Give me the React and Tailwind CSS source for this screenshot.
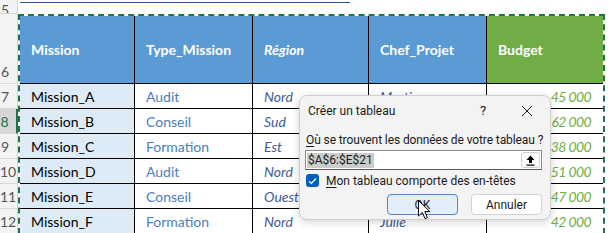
import React from "react";

const rows = [
  ["Mission_A", "Audit", "Nord", "Martin", "45 000"],
  ["Mission_B", "Conseil", "Sud", "Sophie", "62 000"],
  ["Mission_C", "Formation", "Est", "Paul", "38 000"],
  ["Mission_D", "Audit", "Nord", "Claire", "51 000"],
  ["Mission_E", "Conseil", "Ouest", "Marc", "47 000"],
  ["Mission_F", "Formation", "Nord", "Julie", "42 000"],
];

const headers = [
  { label: "Mission", cls: "bg-[#5b9bd5]" },
  { label: "Type_Mission", cls: "bg-[#5b9bd5]" },
  { label: "Région", cls: "bg-[#5b9bd5] italic" },
  { label: "Chef_Projet", cls: "bg-[#5b9bd5]" },
  { label: "Budget", cls: "bg-[#70ad47] border-r-0" },
];

const cellBase = "flex items-center border-b border-r border-black pl-[11px] whitespace-nowrap overflow-hidden";

function RowHead({ n, h, active }) {
  return (
    <div
      className={`flex items-end border-b border-[#d9d9d9] pb-[3px] pr-[7px] ${h} ${
        active ? "bg-[#d6d6d6] text-[#217346] border-r-2 border-r-[#217346]" : "bg-[#f3f3f3] text-[#555] border-r border-r-[#d4d4d4]"
      }`}
    >
      <span className="w-full text-center leading-[16px]">{n}</span>
    </div>
  );
}

function Cursor() {
  return (
    <svg width="13" height="20" viewBox="0 0 13 20" className="absolute left-[118px] top-[104px]">
      <path d="M0.5 0.5 L0.5 16 L4.3 12.4 L7 18.6 L9.4 17.6 L6.8 11.6 L11.8 11.6 Z" fill="#fff" stroke="#000" strokeWidth="1" strokeLinejoin="round" />
    </svg>
  );
}

function Dialog() {
  return (
    <div className="absolute left-[299px] top-[95px] w-[252px] h-[125px] rounded-[8px] bg-[#f3f3f3] border border-[#cfcfcf] shadow-[0_2px_8px_rgba(0,0,0,0.18)] font-['Roboto',sans-serif] text-[12px] text-[#1a1a1a]">
      <div className="flex items-center h-[30px] pl-[8px]">
        <span className="flex-1">Créer un tableau</span>
        <span className="w-[20px] text-center text-[13px] mr-[28px]">?</span>
        <svg width="12" height="12" viewBox="0 0 12 12" className="mr-[17px]">
          <path d="M1 1 L11 11 M11 1 L1 11" stroke="#222" strokeWidth="1" />
        </svg>
      </div>
      <div className="mt-[6px] pl-[6px] leading-[16px] tracking-[-0.1px]">
        <span className="underline underline-offset-2">O</span>ù se trouvent les données de votre tableau ?
      </div>
      <div className="mt-[2px] ml-[5px] w-[237px] h-[20px] flex items-center bg-white border border-[#8a8a8a] border-b-[#5a5a5a]">
        <span className="ml-[1px] bg-[#cccccc] px-[1px] leading-[15px]">$A$6:$E$21</span>
        <span className="flex-1" />
        <div className="w-[19px] h-[16px] mr-[1px] flex items-center justify-center border border-[#d0d0d0] rounded-[3px] bg-white">
          <svg width="9" height="11" viewBox="0 0 9 11">
            <path d="M4.5 0.5 L8.5 5 L6 5 L6 8 L3 8 L3 5 L0.5 5 Z" fill="#000" />
            <rect x="0.5" y="9.5" width="8" height="1.2" fill="#000" />
          </svg>
        </div>
      </div>
      <div className="mt-[4px] ml-[6px] flex items-center h-[13px]">
        <div className="w-[13px] h-[13px] rounded-[3px] bg-[#005fb8] flex items-center justify-center">
          <svg width="9" height="8" viewBox="0 0 9 8">
            <path d="M1 4.2 L3.4 6.5 L8 1.5" fill="none" stroke="#fff" strokeWidth="1.2" />
          </svg>
        </div>
        <span className="ml-[7px] leading-[16px]">
          <span className="underline underline-offset-2">M</span>on tableau comporte des en-têtes
        </span>
      </div>
      <div className="mt-[7px] flex justify-end gap-[13px] pr-[8px]">
        <button className="w-[71px] h-[21px] rounded-[4px] bg-[#e2eef9] border border-[#4f88c8] leading-none">OK</button>
        <button className="w-[71px] h-[21px] rounded-[4px] bg-white border border-[#d2d2d2] leading-none">Annuler</button>
      </div>
      <Cursor />
    </div>
  );
}

export default function App() {
  return (
    <div className="relative w-[615px] h-[233px] overflow-hidden bg-white font-['Lato',sans-serif] text-[14px]">
      <div className="flex h-[14px]">
        <div className="w-[18px] h-[14px] bg-[#f3f3f3] border-r border-b border-[#d4d4d4] text-[#555] pr-[7px] flex items-end overflow-hidden">
          <span className="w-full text-center leading-[16px] -mb-[5px]">5</span>
        </div>
        <div className="flex-1">
          <div className="mt-[2px] ml-[2px] w-[330px] h-px bg-[#2f5597]" />
        </div>
      </div>
      <div className="flex">
        <div className="w-[18px] flex flex-col">
          <RowHead n="6" h="h-[70px]" />
          {rows.map((r, i) => (
            <RowHead key={i} n={String(7 + i)} h="h-[25px]" active={i === 1} />
          ))}
        </div>
        <div className="border-2 border-b-0 border-dashed border-[#217346]">
          <div className="grid grid-cols-[115px_118px_116px_118px_116px]">
            {headers.map((h) => (
              <div key={h.label} className={`${cellBase} h-[68px] font-bold text-white ${h.cls}`}>
                {h.label}
              </div>
            ))}
            {rows.map((r, i) => (
              <React.Fragment key={i}>
                <div className={`${cellBase} h-[25px] bg-[#ddebf7] text-black`}>{r[0]}</div>
                <div className={`${cellBase} h-[25px] text-[#4a7ebb]`}>{r[1]}</div>
                <div className={`${cellBase} h-[25px] italic text-[#3e5b93]`}>{r[2]}</div>
                <div className={`${cellBase} h-[25px] italic text-[#3e5b93]`}>{r[3]}</div>
                <div className={`${cellBase} h-[25px] border-r-0 justify-end pr-[12px] italic tracking-[-0.6px] text-[#70ad47]`}>{r[4]}</div>
              </React.Fragment>
            ))}
          </div>
        </div>
      </div>
      <Dialog />
    </div>
  );
}
